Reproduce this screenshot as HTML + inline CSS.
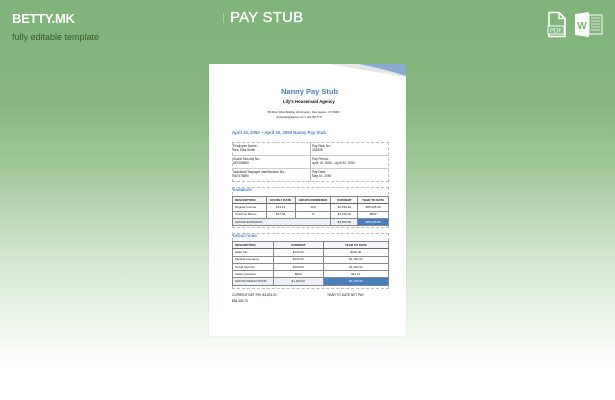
<!DOCTYPE html>
<html><head><meta charset="utf-8"><style>
*{margin:0;padding:0;box-sizing:border-box}
body{width:615px;height:400px;overflow:hidden;position:relative;font-family:"Liberation Sans",sans-serif;
background:linear-gradient(180deg,#7fb379 0%,#85b77f 25%,#a6cba0 45%,#d0e5cc 63%,#ecf5ea 80%,#fff 92%,#fff 100%)}
.a{position:absolute}
.doc{left:209px;top:64px;width:197px;height:272px;background:#fff;box-shadow:0 0 2px rgba(0,0,0,.08)}
.t{position:absolute;white-space:nowrap;font-size:3.2px;color:#222;line-height:1.1}
table{position:absolute;border-collapse:collapse;font-size:3px;color:#222}
td{border:0.6px solid #888;padding:0 2px;height:7.3px;line-height:1;white-space:nowrap}
.c td{text-align:center}
.c td:first-child{text-align:left}
.h td{font-weight:bold;background:#f4f6f9;border-bottom:1px solid #666}
.g td{background:#edf1f6;border-top:1px solid #666}
.b{background:#4a7fbd!important;color:#fff}
.box{position:absolute;border:0.6px dashed #bbb}
</style></head><body>
<div class="a" style="left:12px;top:11px;font-size:13px;font-weight:bold;color:#fff;letter-spacing:-0.3px">BETTY.MK</div>
<div class="a" style="left:12px;top:32px;font-size:9px;color:#3a5a36">fully editable template</div>
<div class="a" style="left:223px;top:13px;width:1px;height:10px;background:#a9cda4"></div>
<div class="a" style="left:230px;top:9px;font-size:15px;color:#fff;letter-spacing:0.2px;-webkit-text-stroke:0.3px #fff">PAY STUB</div>
<svg class="a" style="left:547px;top:11px" width="20" height="27" viewBox="0 0 20 27"><path d="M2 1.5h10l6 6v18H2z" fill="none" stroke="#fff" stroke-width="1.6"/><path d="M12 1.5v6h6" fill="none" stroke="#fff" stroke-width="1.4"/><rect x="1" y="15" width="16" height="8" fill="#7fb379" stroke="#fff" stroke-width="1"/><text x="9" y="21.5" font-size="6" fill="#fff" text-anchor="middle" font-family="Liberation Sans">PDF</text></svg>
<svg class="a" style="left:574px;top:11px" width="30" height="27" viewBox="0 0 30 27"><path d="M1 3l14-2v25L1 24z" fill="#fff"/><text x="8" y="18" font-size="10" font-weight="bold" fill="#7fb379" text-anchor="middle" font-family="Liberation Sans">W</text><rect x="15" y="4" width="13" height="19" fill="none" stroke="#fff" stroke-width="1"/><path d="M17 7h9M17 10h9M17 13h9M17 16h9M17 19h9" stroke="#fff" stroke-width="0.8"/></svg>

<div class="a doc">
<svg class="a" style="left:0;top:0" width="197" height="14"><path d="M120 0 L197 0 L197 13 Z" fill="#e6e6e6"/><path d="M150 0 L197 0 L197 12 Q175 5 150 0Z" fill="#8aaad0"/></svg>
</div>
<div class="t" style="left:281px;top:88px;font-size:7.5px;color:#4a7fbd;font-weight:bold">Nanny Pay Stub</div>
<div class="t" style="left:283px;top:100px;font-size:4.3px;color:#111;font-weight:bold">Lily's Housemaid Agency</div>
<div class="t" style="left:267px;top:112px;font-size:2.6px">795 River Drive Building 120 Anytown, New Heaven, CT 00000</div>
<div class="t" style="left:276px;top:117px;font-size:2.6px">mydomain@agency.com | 123 456 7777</div>
<div class="t" style="left:232px;top:131px;font-size:4.3px;color:#4a7fbd;font-weight:bold">April 15, 2050 – April 30, 2050 Nanny Pay Stub</div>
<div class="box" style="left:232px;top:142px;width:157px;height:40px"></div>
<div class="a" style="left:310px;top:142px;width:0.6px;height:40px;background:#bbb"></div>
<div class="a" style="left:232px;top:155px;width:157px;height:0.6px;background:#ccc"></div>
<div class="a" style="left:232px;top:168px;width:157px;height:0.6px;background:#ccc"></div>
<div class="t" style="left:233px;top:145px">Employee Name:<br>Mrs. Elsa Smith</div>
<div class="t" style="left:312px;top:145px">Pay Stub No.:<br>234456</div>
<div class="t" style="left:233px;top:158px">Social Security No.:<br>567056890</div>
<div class="t" style="left:312px;top:158px">Pay Period:<br>April 15, 2050 – April 30, 2050</div>
<div class="t" style="left:233px;top:171px">Individual Taxpayer Identification No.:<br>567076890</div>
<div class="t" style="left:312px;top:171px">Pay Date:<br>May 01, 2050</div>

<div class="box" style="left:232px;top:187px;width:157px;height:41px"></div>
<div class="t" style="left:233px;top:189px;color:#4a7fbd;font-weight:bold;font-size:3.6px">EARNINGS</div>
<table class="c" style="left:232px;top:196px;width:157px">
<colgroup><col style="width:34px"><col style="width:29px"><col style="width:36px"><col style="width:27px"><col style="width:31px"></colgroup>
<tr class="h"><td>DESCRIPTION</td><td>HOURLY RATE</td><td>HOURS RENDERED</td><td>CURRENT</td><td>YEAR TO DATE</td></tr>
<tr><td>Regular Income</td><td>$13.14</td><td>120</td><td>$2,159.99</td><td>$55,095.59</td></tr>
<tr><td>Overtime Bonus</td><td>$17.50</td><td>72</td><td>$1,344.00</td><td>$800</td></tr>
<tr class="g"><td colspan="3">GROSS EARNINGS</td><td>$4,504.00</td><td class="b">$55,095.59</td></tr>
</table>

<div class="box" style="left:232px;top:233px;width:157px;height:56px"></div>
<div class="t" style="left:233px;top:235px;color:#4a7fbd;font-weight:bold;font-size:3.6px">DEDUCTIONS</div>
<table class="c" style="left:232px;top:241px;width:157px">
<colgroup><col style="width:41px"><col style="width:50px"><col style="width:66px"></colgroup>
<tr class="h"><td>DESCRIPTION</td><td>CURRENT</td><td>YEAR TO DATE</td></tr>
<tr><td>State Tax</td><td>$100.00</td><td>$200.00</td></tr>
<tr><td>Medical Insurance</td><td>$100.00</td><td>$1,100.00</td></tr>
<tr><td>Social Security</td><td>$100.00</td><td>$1,300.00</td></tr>
<tr><td>Salary Advance</td><td>$800</td><td>$11.12</td></tr>
<tr class="g"><td>GROSS DEDUCTIONS</td><td>$1,100.00</td><td class="b">$1,100.00</td></tr>
</table>
<div class="t" style="left:232px;top:294px;font-size:3.2px;color:#111">CURRENT NET PAY $3,404.00</div>
<div class="t" style="left:232px;top:300px;font-size:3.2px;color:#111">$54,394.70</div>
<div class="t" style="left:327px;top:294px;font-size:3.2px;color:#111">YEAR TO DATE NET PAY</div>
</body></html>
